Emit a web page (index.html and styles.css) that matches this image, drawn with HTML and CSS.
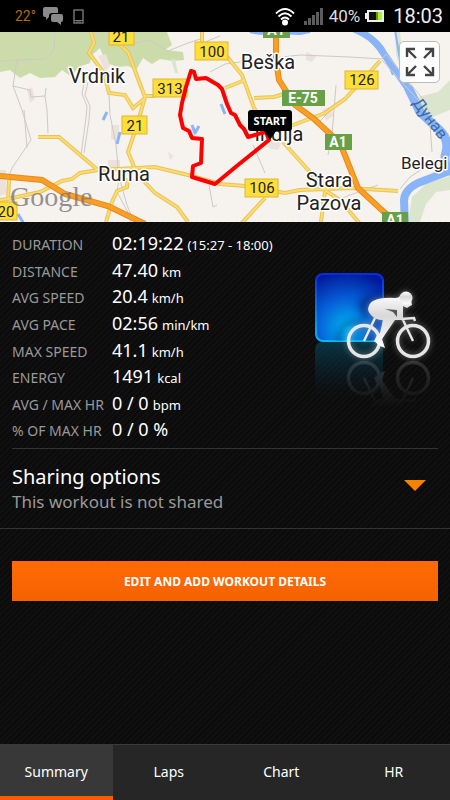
FILE: index.html
```
<!DOCTYPE html>
<html lang="en">
<head>
    <meta charset="UTF-8">
    <meta name="viewport" content="width=device-width, initial-scale=1.0">
    <title>Workout Summary</title>
    <link rel="stylesheet" href="styles.css">
</head>
<body>
    <header class="status-bar">
        <span class="temperature">22°</span>
        <svg class="chat-icon" width="22" height="20" viewBox="0 0 22 20">
            <path d="M3 1h11q2 0 2 2v4h-6q-3 0-3 3v1l-3 3v-3H3q-2 0-2-2V3q0-2 2-2z" fill="#8a8a8a"/>
            <path d="M11 8h8q2 0 2 2v4q0 2-2 2v3l-4-3h-4q-2 0-2-2v-4q0-2 2-2z" fill="#8a8a8a"/>
        </svg>
        <svg class="phone-icon" width="11" height="15" viewBox="0 0 11 15">
            <rect x="1" y="1" width="9" height="13" fill="none" stroke="#777" stroke-width="1.4"/>
            <path d="M1 11.5h9M3 13h5" stroke="#777" stroke-width="1"/>
        </svg>
        <svg class="wifi-icon" width="20" height="19" viewBox="0 0 20 19">
            <g fill="none" stroke="#fff" stroke-width="1.8">
                <path d="M1 6.5Q10-2.5 19 6.5"/>
                <path d="M3.5 9.5Q10 3 16.5 9.5"/>
                <path d="M6 12.5Q10 8.5 14 12.5"/>
            </g>
            <circle cx="10" cy="15.5" r="3" fill="#fff"/>
        </svg>
        <svg class="signal-icon" width="20" height="17" viewBox="0 0 20 17" fill="#5c5c5c">
            <rect x="0" y="13" width="3" height="4"/>
            <rect x="4" y="10" width="3" height="7"/>
            <rect x="8" y="7" width="3" height="10"/>
            <rect x="12" y="4" width="3" height="13"/>
            <rect x="16" y="0" width="3" height="17"/>
        </svg>
        <span class="battery-text">40%</span>
        <svg class="battery-icon" width="19" height="12" viewBox="0 0 19 12">
            <rect x="0" y="3" width="2" height="6" fill="#eee"/>
            <rect x="3" y="1" width="15" height="10" fill="#111" stroke="#eee" stroke-width="2"/>
            <rect x="11" y="2" width="2" height="8" fill="#5d9b00"/>
            <rect x="13" y="2" width="4" height="8" fill="#a6f03a"/>
        </svg>
        <span class="clock">18:03</span>
    </header>

    <section class="map">
        <svg class="map-canvas" viewBox="0 32 450 190" preserveAspectRatio="xMidYMid slice">
            <rect x="0" y="32" width="450" height="190" fill="#f6f2ee"/>

            <!-- forests -->
            <path fill="#cbdcaa" d="M0 32H167L172 45 165 50 183 52 184 60 172 61 160 59 152 64 143 58 136 70 128 66 118 67 106 63 100 48 92 55 90 63 78 67 72 77 62 70 55 77 40 78 30 73 20 78 10 70 0 72z"/>
            <path fill="#dbe5ce" d="M395 32h5l4 40 14 25 20-5 12-12v30l-20 8-24-25-10-40zM408 222l4-25 14-13 24-8v14l-14 2-10 12-6 18zM171 59l4 0 3 14-3 0z"/>
            <path fill="#ebe2db" d="M27 90l5-3 3 12-5 4zM98 56l8-2 4 12-5 5zM111 125h8v16l-8-2zM108 160h12v12h-12zM306 52l10 4-4 6-6-2zM322 110l8-3 4 8-8 6zM270 140l12 2-4 8-10-2zM168 152l6 4-4 4zM0 170h6v24l-6 2z"/>

            <!-- water -->
            <g fill="none" stroke="#8ab4f8" stroke-linejoin="round">
                <path stroke-width="4" d="M250 31Q262 34 275 32L300 33 310 31"/>
                <path stroke-width="7" d="M354 29Q376 38 384 54L398 74 414 97"/>
                <path stroke-width="9" d="M408 87L420 112 436 127Q450 138 446 152T452 172"/>
                <path stroke-width="8" d="M405 224L404 201Q404 190 418 183L452 170"/>
                <path stroke-width="2" d="M395 30L401 66M370 40Q388 60 393 75"/>
                <path stroke-width="3" d="M107 112l-4 8M120 132l-3 12M221 104l4 10M192 125l3 8 4-7M18 214l6 10"/>
            </g>

            <!-- minor roads -->
            <g fill="none" stroke="#cfc9c4">
                <path d="M0 61L17 60 46 59 54 50 55 32M17 60L13 86 30 90 31 97 45 96 46 88M13 86L22 110 31 140 12 168 8 178M24 110L27 148M45 96L47 110 48 133"/>
                <path d="M85 78l-3 16 5 12-1 12-5 37M88 82l-3 13 5 11-1 14-5 33M108 75l2 40 6 30 3 32 8 28 8 20M119 177l-2 15 13 24 1 8"/>
                <path d="M128 45l20-5 20 11 20-8 12-4M205 42l15-6M210 72L225 64 255 60 300 55 350 57 382 59 386 54 422 98 429 111 432 152M382 60L427 110M336 85l-4 50-4 20M307 112l12 10 8-8M253 145l12 28M378 185L350 195 320 207M400 189l10-12 15-10M209 185l4 22 4-2"/>
            </g>

            <!-- main roads -->
            <defs>
                <path id="mainRoads" d="M91 32l3 11-5 10 15 20 5 20 16 2 8 13 11-9M120 45l8 7 9 24 8 21-7 25-10 30 7 17M145 96l8 0 8-4M202 32v12M38 137h21L98 170M0 200L8 199 40 192 62 181 72 179 80 173 98 170 155 167 192 176 220 184 245 186 285 193 300 190 350 188 398 191M138 175L155 193 177 207 188 222M128 178l-1 9-10 4-5 11-6 20M9 180L8 200M220 48l22 27 12 33 15 25M225 88l20-8M254 98l20-1 13-4M380 61L345 99 325 113 280 130M283 142L309 171 323 189 340 200 360 224M325 192l-4 30M265 198L241 224"/>
                <path id="motorways" d="M0 176L42 180 65 194 108 206 145 224M276 32V60L279 80 295 105 313 118 340 143 358 188 385 213 400 224"/>
            </defs>
            <use class="road-edge" href="#mainRoads"/>
            <use class="road" href="#mainRoads"/>
            <use class="motorway-edge" href="#motorways"/>
            <use class="motorway" href="#motorways"/>

            <!-- road signs -->
            <g class="sign">
                <rect x="109" y="27" width="25" height="18"/><text x="121" y="42">21</text>
                <rect x="195" y="42" width="33" height="18"/><text x="212" y="57">100</text>
                <rect x="153" y="79" width="34" height="18"/><text x="170" y="94">313</text>
                <rect x="345" y="71" width="33" height="18"/><text x="362" y="85">126</text>
                <rect x="122" y="116" width="25" height="18"/><text x="135" y="131">21</text>
                <rect x="245" y="179" width="33" height="18"/><text x="262" y="193">106</text>
                <rect x="-6" y="202" width="23" height="18"/><text x="6" y="217">20</text>
            </g>
            <g class="sign-green">
                <rect x="263" y="22" width="27" height="16"/><text x="276" y="35">A1</text>
                <rect x="282" y="90" width="43" height="16"/><text x="303" y="103">E-75</text>
                <rect x="325" y="134" width="27" height="16"/><text x="338" y="147">A1</text>
                <rect x="382" y="212" width="26" height="16"/><text x="395" y="225">A1</text>
            </g>

            <!-- places -->
            <g class="place">
                <text x="97" y="83">Vrdnik</text>
                <text x="268" y="69">Beška</text>
                <text x="124" y="181">Ruma</text>
                <text x="279" y="141">Inđija</text>
                <text x="329" y="187">Stara</text>
                <text x="329" y="210">Pazova</text>
            </g>
            <text class="village" x="401" y="169">Belegi</text>
            <text class="river-name" transform="translate(412 103) rotate(53)">Дунав</text>
            <text class="google" x="10" y="206">Google</text>

            <path class="route" d="M265 132L248 137 244 129 240 125 235 115 231 113 227 104 222 89 218 85 206 78 196 79 194 72 191 71 186 87 182 103 180 115 183 128 189 131 192 138 202 139 201 163 193 166 192 177 215 184 238 165 269 140 266 132"/>
            <path d="M251 110h38q3 0 3 3v15q0 3-3 3h-13l-6 9-6-9h-13q-3 0-3-3v-15q0-3 3-3z" fill="#000"/>
            <text class="start" x="270" y="125">START</text>
        </svg>
        <button class="fullscreen" aria-label="Full screen map">
            <svg width="30" height="30" viewBox="0 0 30 30" fill="none" stroke="#444" stroke-width="2.4">
                <path d="M10 2H2v8M2 2l9 9M20 2h8v8M28 2l-9 9M10 28H2v-8M2 28l9-9M20 28h8v-8M28 28l-9-9"/>
            </svg>
        </button>
    </section>

    <main class="content">
        <section class="stats">
            <dl class="stats-list">
                <dt>DURATION</dt><dd>02:19:22 <small>(15:27 - 18:00)</small></dd>
                <dt>DISTANCE</dt><dd>47.40 <small>km</small></dd>
                <dt>AVG SPEED</dt><dd>20.4 <small>km/h</small></dd>
                <dt>AVG PACE</dt><dd>02:56 <small>min/km</small></dd>
                <dt>MAX SPEED</dt><dd>41.1 <small>km/h</small></dd>
                <dt>ENERGY</dt><dd>1491 <small>kcal</small></dd>
                <dt>AVG / MAX HR</dt><dd>0 / 0 <small>bpm</small></dd>
                <dt>% OF MAX HR</dt><dd>0 / 0 %</dd>
            </dl>
            <svg class="sport-icon" width="135" height="135" viewBox="0 0 135 135">
                <defs>
                    <radialGradient id="blue" cx="0.45" cy="0.8" r="0.85">
                        <stop offset="0" stop-color="#00b4f0"/>
                        <stop offset="0.5" stop-color="#0560d8"/>
                        <stop offset="1" stop-color="#02189a"/>
                    </radialGradient>
                    <linearGradient id="edge" x1="0" y1="0" x2="0" y2="1">
                        <stop offset="0" stop-color="#0a2be0"/>
                        <stop offset="1" stop-color="#08b8ee"/>
                    </linearGradient>
                    <linearGradient id="reflect" x1="0" y1="0" x2="0" y2="1">
                        <stop offset="0" stop-color="#06506a" stop-opacity="0.6"/>
                        <stop offset="1" stop-color="#063040" stop-opacity="0"/>
                    </linearGradient>
                    <linearGradient id="body" x1="0" y1="0" x2="0" y2="1">
                        <stop offset="0" stop-color="#fff"/>
                        <stop offset="0.4" stop-color="#d8d8d8"/>
                        <stop offset="1" stop-color="#fff"/>
                    </linearGradient>
                    <linearGradient id="fade" x1="0" y1="0" x2="0" y2="1">
                        <stop offset="0.4" stop-color="#000"/>
                        <stop offset="1" stop-color="#fff"/>
                    </linearGradient>
                    <mask id="fadeMask" maskUnits="userSpaceOnUse" x="0" y="0" width="135" height="94">
                        <rect width="135" height="94" fill="url(#fade)"/>
                    </mask>
                    <filter id="glow" x="-20%" y="-20%" width="140%" height="140%">
                        <feGaussianBlur stdDeviation="3"/>
                    </filter>
                    <clipPath id="tile"><rect x="0" y="0" width="68" height="68" rx="7"/></clipPath>
                    <g id="cyclist">
                        <circle cx="49" cy="68" r="15.5" fill="none" stroke-width="3.5"/>
                        <circle cx="98" cy="68" r="15.5" fill="none" stroke-width="3.5"/>
                        <path d="M49 68L60 45M98 68L88 47M86 46L99 45L100 48" fill="none" stroke-width="2.4"/>
                        <path stroke="none" fill-rule="evenodd" d="M53 36Q54 30 58 28Q66 24 80 25Q85 25 86 21L96 26 97 32 95 33 92 35 88 33V47H80L67 66 70 75 65 73 59 68 62 62 65 60 68 47Q60 47 56 42Q53 39 53 36ZM70 36L82 37V44L78 39Z"/>
                        <circle cx="91" cy="25" r="6.5" stroke="none"/>
                    </g>
                </defs>
                <rect x="0" y="69" width="68" height="55" rx="7" fill="url(#reflect)"/>
                <rect x="1" y="1" width="67" height="67" rx="7" fill="url(#blue)" stroke="url(#edge)" stroke-width="2"/>
                <g clip-path="url(#tile)"><use href="#cyclist" x="-10" y="-3" fill="#001a60" stroke="#001a60" opacity="0.5" filter="url(#glow)"/></g>
                <g transform="translate(0 173) scale(1 -1)"><use href="#cyclist" fill="#888" stroke="#888" opacity="0.35" mask="url(#fadeMask)"/></g>
                <use href="#cyclist" fill="#fff" stroke="#fff" opacity="0.4" filter="url(#glow)"/>
                <use href="#cyclist" fill="url(#body)" stroke="#e6e6e6"/>
            </svg>
        </section>

        <button class="sharing">
            <span class="sharing-text">
                <span class="sharing-title">Sharing options</span>
                <span class="sharing-status">This workout is not shared</span>
            </span>
            <svg class="arrow" width="22" height="11" viewBox="0 0 22 11"><path d="M0 0h22L11 11z" fill="#f78200"/></svg>
        </button>

        <div class="actions">
            <button class="edit">EDIT AND ADD WORKOUT DETAILS</button>
        </div>
    </main>

    <nav class="tabs">
        <a href="#summary" class="active">Summary</a>
        <a href="#laps">Laps</a>
        <a href="#chart">Chart</a>
        <a href="#hr">HR</a>
    </nav>
</body>
</html>
```
FILE: styles.css
```
* {
    box-sizing: border-box;
}
body {
    margin: 0;
    min-height: 100vh;
    display: flex;
    flex-direction: column;
    font-family: "Noto Sans", sans-serif;
    color: #fff;
    background: repeating-linear-gradient(135deg, #0b0b0b 0, #0b0b0b 2px, #101010 2px, #101010 4px);
}
button {
    border: none;
    padding: 0;
    font-family: inherit;
    color: inherit;
    cursor: pointer;
}
.status-bar {
    height: 32px;
    padding: 0 7px 0 15px;
    display: flex;
    align-items: center;
    background-color: #000;
    font-family: Roboto, sans-serif;
}
.temperature {
    font-size: 14px;
    color: #b06a10;
}
.chat-icon {
    margin-left: 6px;
}
.phone-icon {
    margin-left: 9px;
}
.wifi-icon {
    margin-left: auto;
}
.signal-icon {
    margin-left: 9px;
}
.battery-text {
    margin-left: 5px;
    font-size: 17px;
    color: #ddd;
}
.battery-icon {
    margin-left: 5px;
}
.clock {
    margin-left: 9px;
    font-size: 20px;
    color: #eee;
}
.map {
    position: relative;
    height: 190px;
}
.map-canvas {
    display: block;
    width: 100%;
    height: 100%;
    font-family: Roboto, sans-serif;
}
.road-edge {
    fill: none;
    stroke: #e8c35a;
    stroke-width: 4;
}
.road {
    fill: none;
    stroke: #fbdc6e;
    stroke-width: 2;
}
.motorway-edge {
    fill: none;
    stroke: #e58a1c;
    stroke-width: 6;
}
.motorway {
    fill: none;
    stroke: #fa9e25;
    stroke-width: 4;
}
.sign rect {
    fill: #fede3a;
    stroke: #e3b62c;
}
.sign text {
    font-size: 15px;
    text-anchor: middle;
    fill: #222;
}
.sign-green rect {
    fill: #67a046;
}
.sign-green text {
    font-size: 14px;
    font-weight: bold;
    text-anchor: middle;
    fill: #fff;
}
.place {
    font-size: 20px;
    text-anchor: middle;
}
.village {
    font-size: 17px;
}
.place,
.village {
    fill: #222;
    stroke: #fff;
    stroke-width: 3px;
    stroke-linejoin: round;
    paint-order: stroke;
}
.river-name {
    font-size: 16px;
    fill: #3b6ba5;
}
.google {
    font-family: "Liberation Serif", serif;
    font-size: 28px;
    fill: #777;
    fill-opacity: 0.8;
}
.route {
    fill: none;
    stroke: #f00;
    stroke-width: 4;
    stroke-linejoin: round;
}
.start {
    font-family: "Noto Sans", sans-serif;
    font-size: 11px;
    font-weight: bold;
    text-anchor: middle;
    fill: #fff;
}
.fullscreen {
    position: absolute;
    top: 9px;
    right: 10px;
    width: 41px;
    height: 42px;
    display: flex;
    align-items: center;
    justify-content: center;
    background-color: rgba(255, 255, 255, 0.92);
    border: 1px solid #bbb;
    border-radius: 5px;
}
.content {
    flex: 1;
}
.stats {
    display: flex;
    align-items: flex-start;
    justify-content: space-between;
    margin: 0 12px;
    padding: 9px 0 4px;
    border-bottom: 1px solid #333;
}
.stats-list {
    display: grid;
    grid-template-columns: 100px auto;
    grid-auto-rows: 1fr;
    align-items: baseline;
    height: 213px;
    margin: 0;
    line-height: 24px;
    white-space: nowrap;
}
.stats-list dt {
    font-size: 14px;
    color: #999;
}
.stats-list dd {
    display: flex;
    align-items: baseline;
    gap: 4px;
    margin: 0;
    font-size: 18px;
}
.stats-list small {
    font-size: 13px;
}
.sport-icon {
    flex: none;
    margin: 42px -12px 0 0;
}
.sharing {
    width: 100%;
    height: 80px;
    padding: 0 24px 0 12px;
    display: flex;
    align-items: center;
    justify-content: space-between;
    background: none;
    border-bottom: 1px solid #333;
    text-align: left;
}
.sharing-title,
.sharing-status {
    display: block;
    line-height: 25px;
}
.sharing-title {
    font-size: 20px;
}
.sharing-status {
    font-size: 17px;
    color: #999;
}
.arrow {
    margin-bottom: 6px;
}
.actions {
    padding: 32px 12px;
}
.edit {
    display: block;
    width: 100%;
    height: 40px;
    background: linear-gradient(#ff6a04, #f56200);
    font-size: 12px;
    font-weight: bold;
}
.tabs {
    display: flex;
    height: 56px;
    background-color: #262626;
    border-top: 1px solid #3a3a3a;
}
.tabs a {
    flex: 1;
    display: flex;
    align-items: center;
    justify-content: center;
    padding-top: 2px;
    border-bottom: 4px solid transparent;
    font-size: 14px;
    color: #fff;
    text-decoration: none;
}
.tabs .active {
    background-color: #383838;
    border-bottom-color: #ff5a00;
}
```
